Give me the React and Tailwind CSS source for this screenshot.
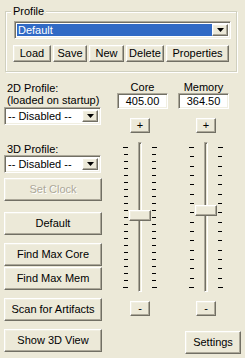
import React from 'react';

// classic XP bevels
const raised =
  'bg-[#ECE9D8] border border-t-white border-l-white border-r-[#716F64] border-b-[#716F64] shadow-[inset_-1px_-1px_0_#ACA899,inset_1px_1px_0_#F1EFE2]';
const sunken =
  'border border-t-[#ACA899] border-l-[#ACA899] border-r-white border-b-white shadow-[inset_1px_1px_0_#716F64,inset_-1px_-1px_0_#F1EFE2]';

const Arrow = () => (
  <div className={`${raised} w-[16px] h-full flex items-center justify-center`}>
    <svg width="7" height="4" viewBox="0 0 7 4">
      <path d="M0 0h7L3.5 4z" fill="#000" />
    </svg>
  </div>
);

const Combo = ({ text, selected, className }) => (
  <div className={`${sunken} bg-white h-[18px] flex items-stretch p-[2px] ${className}`}>
    <div
      className={`flex-1 flex items-center pl-[1px] leading-none ${
        selected ? 'bg-[#316AC5] text-white' : 'text-black'
      }`}
    >
      {text}
    </div>
    <Arrow />
  </div>
);

const Btn = ({ children, className, disabled }) => (
  <div className={`${raised} flex items-center justify-center leading-none ${className}`}>
    {disabled ? (
      <span className="text-[#ACA899] [text-shadow:1px_1px_0_#fff]">{children}</span>
    ) : (
      children
    )}
  </div>
);

const TickCol = ({ count, side }) => (
  <div
    className={`w-[5px] h-[141px] mt-[5px] flex flex-col justify-between ${
      side === 'left' ? 'items-end' : 'items-start'
    }`}
  >
    {Array.from({ length: count }).map((_, i) => (
      <div
        key={i}
        className={`h-[1px] bg-black ${i === 0 || i === count - 1 ? 'w-[5px]' : 'w-[4px]'}`}
      />
    ))}
  </div>
);

// vertical trackbar with ticks on both sides
const Slider = ({ count, thumbTop, className }) => (
  <div className={`relative w-[34px] h-[150px] flex ${className}`}>
    <TickCol count={count} side="left" />
    <div className="ml-[10px] w-[4px] h-[150px] border border-t-[#ACA899] border-l-[#ACA899] border-r-white border-b-white shadow-[inset_1px_1px_0_#716F64]" />
    <div className="ml-[10px]">
      <TickCol count={count} side="right" />
    </div>
    <div className={`${raised} absolute left-[6px] w-[22px] h-[11px]`} style={{ top: thumbTop }} />
  </div>
);

const ClockColumn = ({ label, value, ticks, thumbTop, btnLeft, sliderLeft, className }) => (
  <div className={`w-[51px] flex flex-col ${className}`}>
    <div className="mt-[9px] leading-[12px] text-center">{label}</div>
    <div className={`${sunken} bg-white h-[16px] flex items-center justify-center leading-none`}>
      {value}
    </div>
    <Btn className={`mt-[9px] w-[20px] h-[15px] ${btnLeft}`}>+</Btn>
    <Slider count={ticks} thumbTop={thumbTop} className={`mt-[9px] ${sliderLeft}`} />
    <Btn className={`mt-[9px] w-[20px] h-[15px] ${btnLeft}`}>-</Btn>
  </div>
);

export default function App() {
  return (
    <div className="w-[245px] h-[358px] bg-[#ECE9D8] text-[11px] text-black font-['Liberation_Sans',Arial,sans-serif] flex flex-col overflow-hidden">
      {/* Profile group */}
      <div className="relative mt-[11px] ml-[5px] w-[232px] h-[61px] border border-[#D0D0BF] shadow-[inset_1px_1px_0_#fff,1px_1px_0_#fff] flex flex-col">
        <span className="absolute -top-[8px] left-[5px] px-[2px] bg-[#ECE9D8] leading-[14px]">Profile</span>
        <Combo text="Default" selected className="mt-[9px] ml-[8px] w-[217px]" />
        <div className="mt-[6px] ml-[7px] flex gap-[2px] h-[17px]">
          <Btn className="w-[38px]">Load</Btn>
          <Btn className="w-[34px]">Save</Btn>
          <Btn className="w-[35px]">New</Btn>
          <Btn className="w-[38px]">Delete</Btn>
          <Btn className="w-[63px]">Properties</Btn>
        </div>
      </div>

      <div className="flex">
        {/* left column */}
        <div className="ml-[4px] w-[98px] flex flex-col">
          <div className="mt-[10px] leading-[12px] ml-[3px]">
            2D Profile:
            <br />
            (loaded on startup)
          </div>
          <Combo text="-- Disabled --" className="mt-[1px] w-[97px]" />
          <div className="mt-[18px] leading-[12px] ml-[3px]">3D Profile:</div>
          <Combo text="-- Disabled --" className="w-[97px]" />
          <Btn disabled className="mt-[5px] h-[23px]">Set Clock</Btn>
          <Btn className="mt-[11px] h-[23px]">Default</Btn>
          <Btn className="mt-[8px] h-[23px]">Find Max Core</Btn>
          <Btn className="mt-[1px] h-[23px]">Find Max Mem</Btn>
          <Btn className="mt-[8px] h-[23px]">Scan for Artifacts</Btn>
          <Btn className="mt-[8px] h-[23px]">Show 3D View</Btn>
        </div>

        {/* right side */}
        <div className="flex flex-col">
          <div className="flex">
            <ClockColumn label="Core" value="405.00" ticks={21} thumbTop={68} btnLeft="ml-[13px]" sliderLeft="ml-[6px]" className="ml-[15px]" />
            <ClockColumn label="Memory" value="364.50" ticks={16} thumbTop={63} btnLeft="ml-[18px]" sliderLeft="ml-[11px]" className="ml-[10px]" />
          </div>
          <Btn className="mt-[15px] ml-[83px] w-[56px] h-[23px]">Settings</Btn>
        </div>
      </div>
    </div>
  );
}
